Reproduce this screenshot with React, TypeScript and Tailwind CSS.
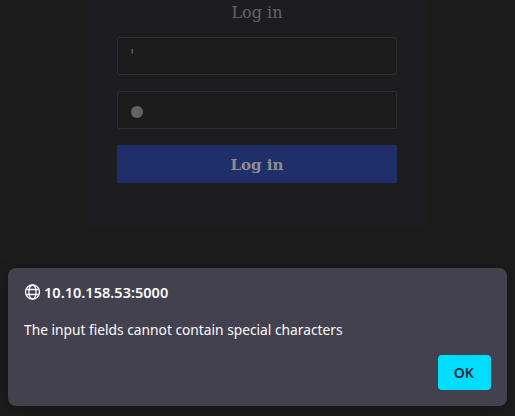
import React from "react";

function GlobeIcon() {
  return (
    <svg width="16" height="16" viewBox="0 0 16 16" fill="none" stroke="#fbfbfe" strokeWidth="1.3" className="shrink-0">
      <circle cx="8.5" cy="8" r="7" />
      <ellipse cx="8.5" cy="8" rx="3.6" ry="7" />
      <path d="M2 5.5h13M2 10.5h13" />
    </svg>
  );
}

function LoginForm() {
  return (
    <form className="ml-[87px] flex h-[228px] w-[340px] flex-col bg-[#1d1c20] px-[30px] font-['DejaVu_Serif',serif] text-base text-[#666563]">
      <h1 className="h-[37px] pt-px text-center leading-[23px]">Log in</h1>
      <div className="h-[38px] rounded-[2px] border border-[#2e2e31] bg-[#1c1c1d] px-3 pt-[9px] text-base leading-[18px]">'</div>
      <div className="mt-4 flex h-[38px] items-center rounded-[2px] border border-[#2e2e31] bg-[#1c1c1d] px-[13px] pt-[3px]">
        <span className="size-3 rounded-full bg-[#666260]" />
      </div>
      <button type="button" className="mt-4 h-[38px] rounded-[2px] border border-[#1f3069] bg-[#1f2f69] pt-0.5 text-[15px] font-bold text-[#8e8d8e]">
        Log in
      </button>
    </form>
  );
}

function AlertDialog() {
  return (
    <section
      role="alertdialog"
      className="mx-2 mt-10 flex h-[138px] flex-col rounded-lg bg-[#42414d] px-4 pb-4 font-['Noto_Sans',sans-serif] text-[#fbfbfe] shadow-[0_2px_14px_rgba(0,0,0,0.25)]"
    >
      <div className="mt-[14px] flex h-5 items-center gap-[3.5px] text-[15px] font-semibold">
        <GlobeIcon />
        <span className="origin-left scale-x-[0.97] leading-5">10.10.158.53:5000</span>
      </div>
      <p className="mt-[17px] origin-left scale-x-[0.917] self-start whitespace-nowrap text-[15px] leading-5">
        The input fields cannot contain special characters
      </p>
      <button type="button" className="mt-auto h-[35px] w-[53px] self-end rounded bg-[#00ddff] pr-px text-[15px] font-semibold text-[#2b2a33]">
        <span className="inline-block scale-x-[0.94]">OK</span>
      </button>
    </section>
  );
}

export default function App() {
  return (
    <main className="h-[416px] w-[515px] overflow-hidden bg-[#1c1c1d]">
      <LoginForm />
      <AlertDialog />
    </main>
  );
}
